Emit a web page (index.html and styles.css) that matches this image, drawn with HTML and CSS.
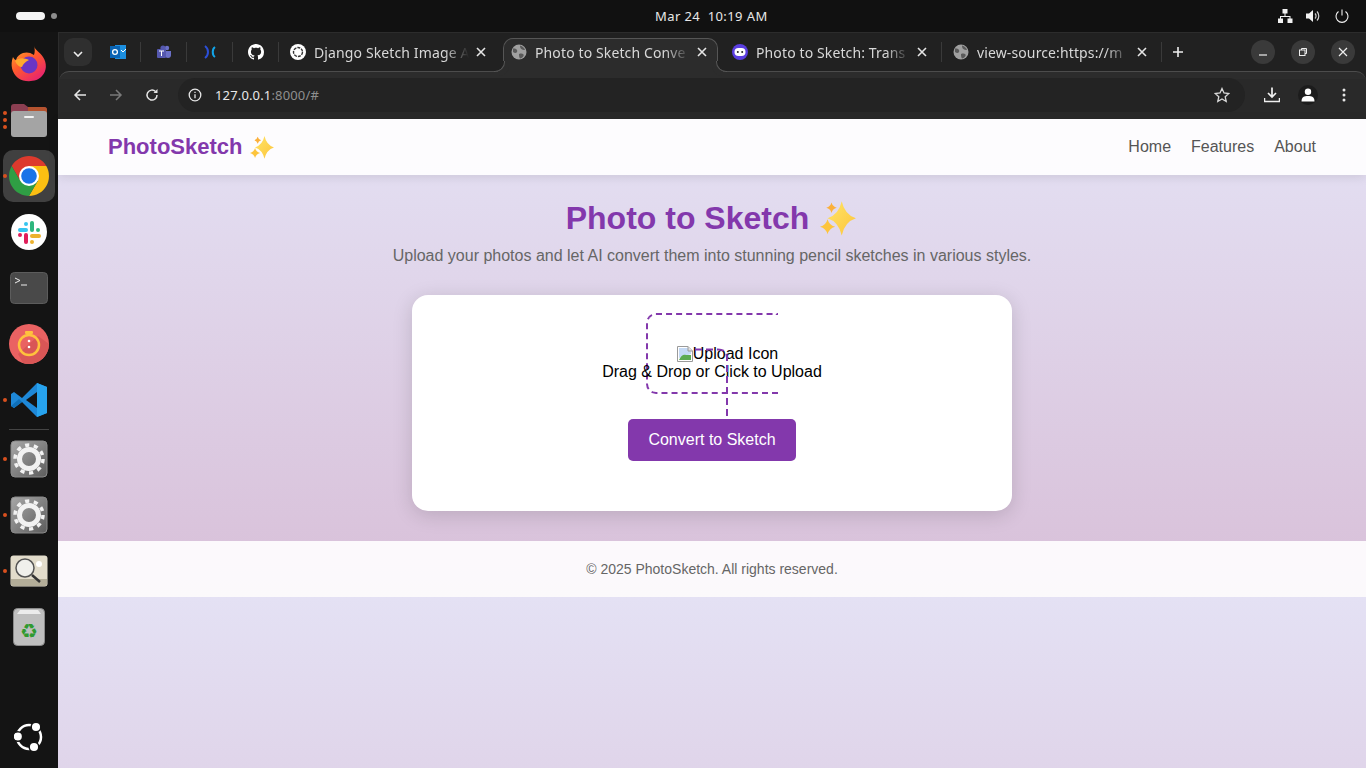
FILE: index.html
```html
<!DOCTYPE html>
<html lang="en">
	<head>
		<meta charset="UTF-8" />
		<title>Photo to Sketch Converter</title>
		<link rel="stylesheet" href="styles.css">
	</head>
	<body>
		<svg class="defs" width="0" height="0">
			<defs>
				<path id="star" d="M12 0Q14.500 9.500 24 12Q14.500 14.500 12 24Q9.500 14.500 0 12Q9.500 9.500 12 0Z" />
				<g id="sparkle-set">
					<use href="#star" fill="url(#star-fill)" transform="translate(5 0) scale(0.790 0.950)" />
					<use href="#star" fill="#fbb03b" transform="translate(4.200 0.800) scale(0.290)" />
					<use href="#star" fill="#fdc43c" transform="translate(0 12) scale(0.420)" />
				</g>
				<g id="x-icon"><path d="M2 2L10 10M10 2L2 10" stroke="#e6e6e6" stroke-width="1.600" fill="none" /></g>
				<g id="globe">
					<circle cx="8" cy="8" r="7.500" fill="#a0a0a0" />
					<path d="M2 4.500C5 4 7 6 6 8C5 9.500 3.500 9 2 8ZM9 1.500C12 2.500 13.500 4 14 6C11 6 9 5 9 1.500ZM8 10C11 9 13.500 10 12.500 12C11.500 13.500 10.500 14.500 9 14.500C8 13 8 11.500 8 10Z" fill="#5a5a5a" />
				</g>
				<g id="gear-tile">
					<rect x="1" y="1" width="36" height="36" rx="4" fill="url(#tile)" stroke="#8a8a8a" />
					<circle cx="19" cy="19" r="9.500" fill="none" stroke="#f2f2f2" stroke-width="5" />
					<circle cx="19" cy="19" r="14" fill="none" stroke="#f2f2f2" stroke-width="3.500" stroke-dasharray="4.200 4.600" />
				</g>
				<linearGradient id="tile" x1="0" y1="0" x2="1" y2="1">
					<stop offset="0" stop-color="#a8a8a8" />
					<stop offset="1" stop-color="#5c5c5c" />
				</linearGradient>
				<linearGradient id="star-fill" x1="0" y1="0" x2="1" y2="1">
					<stop offset="0" stop-color="#ffe566" />
					<stop offset="1" stop-color="#fdc43c" />
				</linearGradient>
			</defs>
		</svg>

		<header class="topbar">
			<div class="workspaces"><span class="ws-pill"></span><span class="ws-dot"></span></div>
			<div class="clock">Mar 24&nbsp; 10:19 AM</div>
			<div class="tray">
				<svg width="16" height="14" viewBox="0 0 16 14"><path d="M5.500 0h5v4.500h-5zM7.500 4.500h1V7h5v2.500h2V14h-5V9.500h2V8H4v1.500h2V14H1V9.500h2V7h4.500z" fill="#f2f2f2" /></svg>
				<svg width="16" height="14" viewBox="0 0 16 14"><path d="M0 4.500h3L7 1v12L3 9.500H0z" fill="#f2f2f2" /><path d="M9 4.500a3.500 3.500 0 0 1 0 5M11 2.500a6.500 6.500 0 0 1 0 9" stroke="#d0d0d0" stroke-width="1.200" fill="none" /></svg>
				<svg width="14" height="14" viewBox="0 0 14 14"><path d="M7 0.500v6M3.500 2.500a6 6 0 1 0 7 0" stroke="#f2f2f2" stroke-width="1.100" fill="none" /></svg>
			</div>
		</header>

		<div class="desktop">
			<nav class="dock">
				<div class="dock-item">
					<svg width="38" height="38" viewBox="0 0 38 38">
						<defs><linearGradient id="fox" x1="0" y1="0" x2="0.700" y2="1"><stop offset="0" stop-color="#ffb52e" /><stop offset="0.500" stop-color="#ff5a2c" /><stop offset="1" stop-color="#e8246f" /></linearGradient></defs>
						<path d="M24 1C25 5 30 7 33 12C37 18 37 26 32 31C27 37 15 38 8 33C2 28 0 20 3 12C4 14 5 15 6 15C7 11 10 9 13 8C16 7 20 7 24 10C25 7 25 4 24 1Z" fill="url(#fox)" />
						<circle cx="19" cy="20" r="8.500" fill="#6a35c4" />
						<path d="M5 16C9 12 15 13 19 15C15 17 13 19 12 22C9 22 7 20 5 16Z" fill="#ffa92d" />
					</svg>
				</div>
				<div class="dock-item">
					<span class="dots"><i></i><i></i><i></i></span>
					<svg width="38" height="38" viewBox="0 0 38 38">
						<path d="M1 6a3 3 0 0 1 3-3h10l4 3h16a3 3 0 0 1 3 3v8H1z" fill="#8c3f52" />
						<path d="M18 6h16a3 3 0 0 1 3 3v4H18z" fill="#b5532f" />
						<path d="M1 13a3 3 0 0 1 3-3h30a3 3 0 0 1 3 3v20a3 3 0 0 1-3 3H4a3 3 0 0 1-3-3z" fill="#a4a4a4" />
						<rect x="14" y="15" width="10" height="2" rx="1" fill="#f2f2f2" />
					</svg>
				</div>
				<div class="dock-item active has-dot">
					<svg width="40" height="40" viewBox="0 0 40 40">
						<path d="M2.700 10L11.300 25L20 20V10H37.300A20 20 0 0 0 2.700 10Z" fill="#dd3a2d" />
						<path d="M37.300 10H20V20L28.700 25L20 40A20 20 0 0 0 37.300 10Z" fill="#fbbf12" />
						<path d="M20 40L28.700 25L20 20L11.300 25L2.700 10A20 20 0 0 0 20 40Z" fill="#2f9e44" />
						<circle cx="20" cy="20" r="10" fill="#fff" />
						<circle cx="20" cy="20" r="7.800" fill="#1a73e8" />
					</svg>
				</div>
				<div class="dock-item">
					<svg width="36" height="36" viewBox="0 0 36 36">
						<circle cx="18" cy="18" r="18" fill="#fff" />
						<rect x="7" y="14" width="10" height="4" rx="2" fill="#36c5f0" /><rect x="13" y="8" width="4" height="4" rx="2" fill="#36c5f0" />
						<rect x="19" y="7" width="4" height="11" rx="2" fill="#2eb67d" /><rect x="25" y="14" width="4" height="4" rx="2" fill="#2eb67d" />
						<rect x="19" y="20" width="11" height="4" rx="2" fill="#ecb22e" /><rect x="19" y="26" width="4" height="4" rx="2" fill="#ecb22e" />
						<rect x="13" y="19" width="4" height="11" rx="2" fill="#e01e5a" /><rect x="7" y="19" width="4" height="4" rx="2" fill="#e01e5a" />
					</svg>
				</div>
				<div class="dock-item">
					<svg width="38" height="32" viewBox="0 0 38 32">
						<rect x="0.500" y="0.500" width="37" height="31" rx="4" fill="#494949" stroke="#5c5c5c" />
						<path d="M5 6L10 8.500L5 11" stroke="#eee" fill="none" /><path d="M11 13h6" stroke="#eee" />
					</svg>
				</div>
				<div class="dock-item">
					<svg width="40" height="40" viewBox="0 0 40 40">
						<circle cx="20" cy="20" r="20" fill="#ea6262" />
						<path d="M9 30L29 12L40 20A20 20 0 0 1 14 39Z" fill="#d95656" />
						<circle cx="20" cy="21" r="10" fill="none" stroke="#ffc23d" stroke-width="2.500" />
						<rect x="16" y="7" width="8" height="3" rx="1" fill="#ffc23d" />
						<circle cx="20" cy="17" r="1.300" fill="#fff" /><circle cx="20" cy="23" r="1.300" fill="#fff" />
					</svg>
				</div>
				<div class="dock-item has-dot">
					<svg width="36" height="36" viewBox="0 0 36 36">
						<path d="M26 1L36 5V31L26 35L11 20L3 26L0 24V12L3 10L11 16Z" fill="#1e88d8" />
						<path d="M26 1L36 5V31L26 35Z" fill="#27a3ee" />
						<path d="M26 10L15 18L26 26Z" fill="#151515" />
						<path d="M0 24L3 26L11 20L8 17Z" fill="#0f6fb8" />
					</svg>
				</div>
				<div class="dock-sep"></div>
				<div class="dock-item has-dot"><svg width="38" height="38" viewBox="0 0 38 38"><use href="#gear-tile" /></svg></div>
				<div class="dock-item has-dot"><svg width="38" height="38" viewBox="0 0 38 38"><use href="#gear-tile" /></svg></div>
				<div class="dock-item has-dot">
					<svg width="38" height="32" viewBox="0 0 38 32">
						<rect x="0.500" y="0.500" width="37" height="31" rx="3" fill="#e2dccb" />
						<path d="M1 24H37V29a2 2 0 0 1-2 2H3a2 2 0 0 1-2-2Z" fill="#b3ad98" />
						<circle cx="15" cy="13" r="9" fill="#f0f0ec" stroke="#555" stroke-width="1.500" />
						<path d="M22 20L30 27" stroke="#333" stroke-width="2.500" />
						<circle cx="29" cy="9" r="3" fill="#fff" />
					</svg>
				</div>
				<div class="dock-item">
					<svg width="32" height="38" viewBox="0 0 32 38">
						<rect x="0.500" y="0.500" width="31" height="37" rx="4" fill="#bfbfbf" stroke="#8b8b8b" />
						<path d="M4 6L7 2H25L28 6Z" fill="#ececec" />
						<text x="16" y="30" class="recycle">♻</text>
					</svg>
				</div>
				<div class="dock-spacer"></div>
				<div class="dock-item">
					<svg width="30" height="30" viewBox="0 0 30 30">
						<circle cx="15" cy="15" r="12" fill="none" stroke="#fff" stroke-width="2.500" />
						<circle cx="22" cy="5" r="4.800" fill="#fff" stroke="#141414" stroke-width="1.500" />
						<circle cx="3.800" cy="14.500" r="4.800" fill="#fff" stroke="#141414" stroke-width="1.500" />
						<circle cx="20" cy="25" r="4.800" fill="#fff" stroke="#141414" stroke-width="1.500" />
					</svg>
				</div>
			</nav>

			<div class="browser">
				<div class="tabstrip">
					<button class="tab-search"><svg width="10" height="6" viewBox="0 0 10 6"><path d="M1 1l4 4 4-4" stroke="#eee" stroke-width="1.600" fill="none" /></svg></button>
					<div class="pin">
						<svg width="16" height="16" viewBox="0 0 16 16"><rect x="5" y="1" width="11" height="14" fill="#1c8fe0" /><rect x="0" y="2" width="10" height="12" fill="#0a64b4" /><circle cx="5" cy="8" r="2.400" fill="none" stroke="#fff" stroke-width="1.300" /><path d="M11 6l2 2 3-3" stroke="#fff" fill="none" /></svg>
					</div>
					<div class="pin">
						<svg width="16" height="16" viewBox="0 0 16 16"><circle cx="11" cy="4" r="2.200" fill="#6b70c8" /><path d="M9 7h6v4a3 3 0 0 1-6 0z" fill="#6b70c8" /><circle cx="7" cy="4" r="2.600" fill="#5558af" /><rect x="1" y="5" width="9" height="9" rx="1" fill="#5558af" /><path d="M3 7h5M5.500 7v5" stroke="#fff" /></svg>
					</div>
					<div class="pin">
						<svg width="16" height="16" viewBox="0 0 16 16"><path d="M3 2C7 5 7 11 3 14" stroke="#2b4fd8" stroke-width="2" fill="none" /><path d="M13 3C10 5 10 11 13 13" stroke="#12a4e8" stroke-width="2" fill="none" /></svg>
					</div>
					<div class="pin">
						<svg width="16" height="16" viewBox="0 0 16 16"><path fill="#fff" d="M8 0C3.580 0 0 3.580 0 8c0 3.540 2.290 6.530 5.470 7.590.4.070.55-.17.55-.38 0-.19-.01-.82-.01-1.490-2.010.37-2.530-.49-2.690-.94-.09-.23-.48-.94-.82-1.130-.28-.15-.68-.52-.01-.53.630-.01 1.080.58 1.230.82.720 1.210 1.870.87 2.330.66.070-.52.280-.87.510-1.070-1.780-.2-3.640-.89-3.640-3.950 0-.87.310-1.590.82-2.150-.08-.2-.36-1.020.08-2.120 0 0 .67-.21 2.200.82.640-.18 1.320-.27 2-.27s1.360.09 2 .27c1.530-1.040 2.200-.82 2.200-.82.440 1.100.16 1.920.08 2.120.51.560.82 1.270.82 2.150 0 3.070-1.870 3.750-3.650 3.950.29.250.54.730.54 1.480 0 1.070-.01 1.930-.01 2.200 0 .21.150.46.550.38A8.010 8.010 0 0 0 16 8c0-4.420-3.580-8-8-8z" /></svg>
					</div>
					<div class="tab t-django">
						<svg width="16" height="16" viewBox="0 0 16 16"><circle cx="8" cy="8" r="8" fill="#fff" /><circle cx="8" cy="8" r="4.500" fill="none" stroke="#333" stroke-width="1.400" stroke-dasharray="3 1" /></svg>
						<span class="tab-title">Django Sketch Image A</span>
						<svg class="tab-x" width="12" height="12" viewBox="0 0 12 12"><use href="#x-icon" /></svg>
					</div>
					<div class="tab current">
						<svg width="16" height="16" viewBox="0 0 16 16"><use href="#globe" /></svg>
						<span class="tab-title">Photo to Sketch Conve</span>
						<svg class="tab-x" width="12" height="12" viewBox="0 0 12 12"><use href="#x-icon" /></svg>
					</div>
					<div class="tab t-transform">
						<svg width="16" height="16" viewBox="0 0 16 16"><circle cx="8" cy="8" r="8" fill="#5a3ee0" /><path d="M12 1.500A8 8 0 0 1 8 16A8 8 0 0 0 12 1.500Z" fill="#28b5e8" /><rect x="2.500" y="4" width="11" height="8" rx="4" fill="#fff" /><circle cx="5.800" cy="8" r="1" fill="#222" /><circle cx="10.200" cy="8" r="1" fill="#222" /></svg>
						<span class="tab-title">Photo to Sketch: Trans</span>
						<svg class="tab-x" width="12" height="12" viewBox="0 0 12 12"><use href="#x-icon" /></svg>
					</div>
					<span class="tab-sep"></span>
					<div class="tab t-source">
						<svg width="16" height="16" viewBox="0 0 16 16"><use href="#globe" /></svg>
						<span class="tab-title">view-source:https://m</span>
						<svg class="tab-x" width="12" height="12" viewBox="0 0 12 12"><use href="#x-icon" /></svg>
					</div>
					<span class="tab-sep"></span>
					<div class="new-tab"><svg width="12" height="12" viewBox="0 0 12 12"><path d="M6 1v10M1 6h10" stroke="#eee" stroke-width="1.600" /></svg></div>
					<div class="win-controls">
						<button><svg width="10" height="10" viewBox="0 0 10 10"><path d="M1 8h8" stroke="#eee" stroke-width="1.200" /></svg></button>
						<button><svg width="10" height="10" viewBox="0 0 10 10"><rect x="1.500" y="3" width="5.500" height="5.500" fill="none" stroke="#eee" /><path d="M3.500 3V1.500h5v5H7" fill="none" stroke="#eee" /></svg></button>
						<button><svg width="10" height="10" viewBox="0 0 10 10"><path d="M1 1l8 8M9 1L1 9" stroke="#eee" stroke-width="1.200" /></svg></button>
					</div>
				</div>

				<div class="toolbar">
					<svg class="tb-icon" width="14" height="14" viewBox="0 0 14 14"><path d="M13 7H2M7 2L2 7l5 5" stroke="#e6e6e6" stroke-width="1.500" fill="none" /></svg>
					<svg class="tb-icon" width="14" height="14" viewBox="0 0 14 14"><path d="M1 7h11M7 2l5 5-5 5" stroke="#7a7a7a" stroke-width="1.500" fill="none" /></svg>
					<svg class="tb-icon" width="14" height="14" viewBox="0 0 14 14"><path d="M12 7a5 5 0 1 1-1.500-3.500" stroke="#e6e6e6" stroke-width="1.500" fill="none" /><path d="M12.500 1v4h-4z" fill="#e6e6e6" /></svg>
					<div class="omnibox">
						<svg class="info" width="14" height="14" viewBox="0 0 14 14"><circle cx="7" cy="7" r="5.800" fill="none" stroke="#e6e6e6" stroke-width="1.300" /><path d="M7 6.200v4M7 3.800v1.300" stroke="#e6e6e6" stroke-width="1.300" /></svg>
						<span class="url">127.0.0.1<span class="url-dim">:8000/#</span></span>
						<svg class="star-btn" width="16" height="16" viewBox="0 0 16 16"><path d="M8 1.500l2 4.500 4.800.5-3.600 3.200 1 4.800L8 12l-4.200 2.500 1-4.800L1.200 6.500 6 6z" fill="none" stroke="#d8d8d8" stroke-width="1.300" /></svg>
					</div>
					<svg class="tb-action" width="16" height="16" viewBox="0 0 16 16"><path d="M8 0.500v9M4 6l4 4 4-4" stroke="#f0f0f0" stroke-width="1.700" fill="none" /><path d="M0.500 11v3.500h15V11" stroke="#f0f0f0" stroke-width="1.500" fill="none" /></svg>
					<div class="avatar"><svg width="14" height="14" viewBox="0 0 14 14"><circle cx="7" cy="3.800" r="3.200" fill="#fff" /><path d="M0.500 13.500C0.500 9 3 8 7 8s6.500 1 6.500 5.500z" fill="#fff" /></svg></div>
					<svg class="tb-menu" width="4" height="14" viewBox="0 0 4 14"><circle cx="2" cy="2" r="1.500" fill="#e6e6e6" /><circle cx="2" cy="7" r="1.500" fill="#e6e6e6" /><circle cx="2" cy="12" r="1.500" fill="#e6e6e6" /></svg>
				</div>

				<div class="viewport">
					<header class="site-header">
						<div class="logo">PhotoSketch
							<svg width="24" height="23" viewBox="0 0 24 23"><use href="#sparkle-set" /></svg>
						</div>
						<nav class="site-nav">
							<a>Home</a>
							<a>Features</a>
							<a>About</a>
						</nav>
					</header>

					<main class="site-main">
						<h1>Photo to Sketch
							<svg class="h1-sparkles" width="36" height="35" viewBox="0 0 24 23"><use href="#sparkle-set" /></svg>
						</h1>
						<p class="lead">Upload your photos and let AI convert them into stunning pencil sketches in various styles.</p>

						<section class="card">
							<div class="upload">
								<div class="upload-line">
									<span class="drop-frag"><svg class="broken-img" width="16" height="16" viewBox="0 0 16 16"><path d="M0.500 0.500H11L15.500 5V15.500H0.500Z" fill="#fff" stroke="#9a9a9a" /><path d="M2 2H10.500L14 5.500V8L2 12Z" fill="#c4d9f5" /><path d="M2 14C4 9 7 8 9 9L14 9V14Z" fill="#5cab52" /><path d="M11 0.500V5H15.500" fill="#e0e0e0" stroke="#9a9a9a" /></svg>Upload Icon</span>
								</div>
								<div class="upload-line">Drag &amp; Drop or Click to Upload</div>
								<svg class="drop-tail" width="36" height="71" viewBox="0 0 36 71"><path d="M0 1.500H23Q32 1.500 32 10V71" fill="none" stroke="#8338ac" stroke-width="2" stroke-dasharray="7 4" /></svg>
							</div>
							<button class="convert">Convert to Sketch</button>
						</section>
					</main>

					<footer class="site-footer">© 2025 PhotoSketch. All rights reserved.</footer>
				</div>
			</div>
		</div>
	</body>
</html>
```

FILE: styles.css
```css
* {
	box-sizing: border-box;
}
html,
body {
	margin: 0;
	height: 100%;
	overflow: hidden;
}
body {
	font-family: "Liberation Sans", Arial, sans-serif;
	background-color: #111;
	color: #000;
}
.defs {
	position: absolute;
}

/* Top bar */
.topbar {
	height: 32px;
	background: #111;
	display: grid;
	grid-template-columns: 639px auto 1fr;
	align-items: center;
	padding: 0 16px;
}
.workspaces {
	display: flex;
	align-items: center;
	gap: 6px;
}
.ws-pill {
	width: 29px;
	height: 8px;
	border-radius: 4px;
	background: #f4f4f4;
}
.ws-dot {
	width: 6px;
	height: 6px;
	border-radius: 50%;
	background: #8d8d8d;
}
.clock {
	font-family: "Noto Sans", sans-serif;
	font-size: 13px;
	color: #e8e8e8;
	letter-spacing: 0.4px;
}
.tray {
	display: flex;
	justify-content: flex-end;
	align-items: center;
	gap: 13px;
	padding-right: 1px;
}

/* Dock */
.desktop {
	display: flex;
	height: 736px;
}
.dock {
	width: 58px;
	background: #141414;
	display: flex;
	flex-direction: column;
	align-items: center;
	padding: 6px 0 1px;
	flex-shrink: 0;
}
.dock-item {
	width: 52px;
	height: 52px;
	margin-bottom: 4px;
	display: flex;
	align-items: center;
	justify-content: center;
	position: relative;
	border-radius: 10px;
}
.dock-item.active {
	background: #404040;
}
.has-dot::before,
.dots i {
	content: "";
	position: absolute;
	left: 0;
	top: 24px;
	width: 4px;
	height: 4px;
	border-radius: 50%;
	background: #d9501e;
}
.dots i:nth-child(1) {
	top: 17px;
}
.dots i:nth-child(2) {
	top: 24px;
}
.dots i:nth-child(3) {
	top: 31px;
}
.dock-sep {
	width: 40px;
	height: 1px;
	background: #444;
	margin: -1px 0 3px;
}
.dock-spacer {
	flex: 1;
}
.recycle {
	font-family: "DejaVu Sans", sans-serif;
	font-size: 20px;
	fill: #2f9a2f;
	text-anchor: middle;
}

/* Browser window */
.browser {
	flex: 1;
	min-width: 0;
	display: flex;
	flex-direction: column;
	background: #212121;
	border-top: 1px solid #2c2c2c;
	border-left: 1px solid #2c2c2c;
}
.tabstrip {
	height: 38px;
	display: flex;
	align-items: center;
	padding: 0 11px 0 5px;
	font-family: "Noto Sans", sans-serif;
	font-size: 14px;
	letter-spacing: 0.12px;
	color: #d8d8d8;
	flex-shrink: 0;
}
.tab-search {
	width: 28px;
	height: 28px;
	border: none;
	border-radius: 9px;
	background: #2f2f2f;
	margin-right: 3px;
	padding: 0;
}
.pin {
	width: 46px;
	height: 20px;
	display: flex;
	align-items: center;
	justify-content: center;
	border-right: 1px solid #3a3a3a;
}
.tab {
	display: flex;
	align-items: center;
	align-self: flex-end;
	height: 34px;
	margin-bottom: -1px;
	padding-bottom: 6px;
}
.tab-title {
	flex: 1;
	min-width: 0;
	margin: 0 6px 0 8px;
	white-space: nowrap;
	overflow: hidden;
	-webkit-mask-image: linear-gradient(to right, #000 84%, transparent);
	mask-image: linear-gradient(to right, #000 84%, transparent);
}
.tab-x {
	flex-shrink: 0;
}
.tab-sep {
	width: 1px;
	height: 20px;
	background: #3a3a3a;
	flex-shrink: 0;
}
.t-django {
	width: 224px;
	padding-left: 11px;
	padding-right: 16px;
}
.current {
	width: 215px;
	background: #2c2c2c;
	border: 1px solid #565656;
	border-bottom: none;
	border-radius: 10px 10px 0 0;
	padding: 0 9px 7px 7px;
	position: relative;
	z-index: 1;
}
.current::before,
.current::after {
	content: "";
	position: absolute;
	bottom: 0;
	width: 10px;
	height: 10px;
	background: #212121;
	border-bottom: 1px solid #565656;
}
.current::before {
	left: -10px;
	border-right: 1px solid #565656;
	border-bottom-right-radius: 10px;
	box-shadow: 4px 4px 0 #2c2c2c;
}
.current::after {
	right: -10px;
	border-left: 1px solid #565656;
	border-bottom-left-radius: 10px;
	box-shadow: -4px 4px 0 #2c2c2c;
}
.t-transform {
	width: 223px;
	padding-left: 14px;
	padding-right: 13px;
}
.t-source {
	width: 219px;
	padding-left: 11px;
	padding-right: 13px;
}
.new-tab {
	width: 32px;
	display: flex;
	justify-content: center;
}
.win-controls {
	margin-left: auto;
	display: flex;
	gap: 16px;
}
.win-controls button {
	width: 24px;
	height: 24px;
	border: none;
	border-radius: 50%;
	background: #3a3a3a;
	padding: 0;
	display: flex;
	align-items: center;
	justify-content: center;
}

.toolbar {
	height: 48px;
	background: linear-gradient(#2c2c2c 7px, #292929 7px);
	border-top: 1px solid #4c4c4c;
	border-radius: 10px 10px 0 0;
	display: flex;
	align-items: center;
	padding: 0 20px 1px 14px;
	flex-shrink: 0;
}
.tb-icon {
	margin-right: 22px;
}
.omnibox {
	flex: 1;
	height: 34px;
	border-radius: 17px;
	background: #232323;
	display: flex;
	align-items: center;
	padding: 0 15px 0 10px;
	margin: 0 19px 0 -3px;
}
.info {
	margin-right: 13px;
}
.url {
	font-family: "Noto Sans", sans-serif;
	font-size: 13px;
	letter-spacing: 0.15px;
	color: #e8e8e8;
}
.url-dim {
	color: #8f8f8f;
}
.star-btn {
	margin-left: auto;
}
.tb-action {
	margin-right: 18px;
}
.avatar {
	width: 20px;
	height: 20px;
	border-radius: 50%;
	background: #1c1c1c;
	display: flex;
	align-items: center;
	justify-content: center;
	margin-right: 24px;
}

/* Page in the viewport */
.viewport {
	flex: 1;
	min-height: 0;
	background: linear-gradient(#e4e1f4, #d8bfd8) 0 0 / 100% 478px repeat-y;
	margin-left: -1px;
}
.site-header {
	height: 56px;
	background: rgba(255, 255, 255, 0.9);
	box-shadow: 0 2px 10px rgba(0, 0, 0, 0.1);
	display: flex;
	align-items: center;
	justify-content: space-between;
	padding: 0 50px;
	position: relative;
}
.logo {
	font-size: 22px;
	font-weight: bold;
	color: #8338ac;
	display: flex;
	align-items: center;
	gap: 8px;
}
.site-nav {
	display: flex;
	gap: 20px;
	font-size: 16px;
	color: #555;
}
.site-main {
	height: 366px;
	padding-top: 25px;
	text-align: center;
}
h1 {
	margin: 0;
	font-size: 32px;
	line-height: 37px;
	color: #8338ac;
	display: flex;
	justify-content: center;
	align-items: center;
	gap: 11px;
}
.h1-sparkles {
	margin-right: 2px;
}
.lead {
	margin: 10px 0 30px;
	font-size: 16px;
	line-height: 18px;
	color: #666;
}
.card {
	width: 600px;
	height: 216px;
	margin: 0 auto;
	padding: 50px 0;
	background: #fff;
	border-radius: 16px;
	box-shadow: 0 4px 20px rgba(0, 0, 0, 0.15);
}
.upload {
	position: relative;
	height: 74px;
	font-size: 16px;
	line-height: 18px;
}
.drop-frag {
	border: 2px dashed #8338ac;
	border-right: none;
	border-radius: 10px 0 0 10px;
	padding: 30px 0 30px 29px;
}
.broken-img {
	vertical-align: -3px;
}
.drop-tail {
	position: absolute;
	left: 283px;
	top: 3px;
}
.convert {
	display: block;
	width: 168px;
	height: 42px;
	margin: 0 auto;
	border: none;
	border-radius: 5px;
	background: #8338ac;
	color: #fff;
	font: 16px "Liberation Sans", Arial, sans-serif;
}
.site-footer {
	height: 56px;
	background: rgba(255, 255, 255, 0.9);
	display: flex;
	align-items: center;
	justify-content: center;
	font-size: 14px;
	color: #666;
}
```
